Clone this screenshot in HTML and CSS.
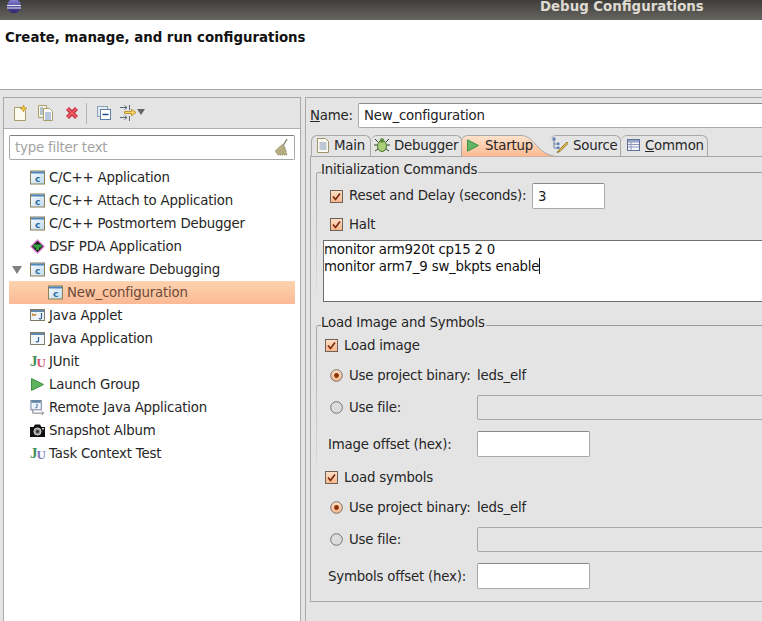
FILE: index.html
```html
<!DOCTYPE html>
<html lang="en">
<head>
<meta charset="utf-8">
<title>Debug Configurations</title>
<link rel="stylesheet" href="styles.css">
</head>
<body>
<svg class="defs" width="0" height="0">
  <defs>
    <linearGradient id="cfill" x1="0" y1="0" x2="1" y2="1"><stop offset="0" stop-color="#fbfdff"/><stop offset="1" stop-color="#bcd9ee"/></linearGradient>
    <linearGradient id="sphere" x1="0" y1="0" x2="0" y2="1"><stop offset="0" stop-color="#8a86d8"/><stop offset="1" stop-color="#2c2170"/></linearGradient>
    <linearGradient id="tabfill" x1="0" y1="0" x2="0" y2="1"><stop offset="0" stop-color="#fde2cc"/><stop offset="1" stop-color="#fbb98f"/></linearGradient>
    <linearGradient id="chk" x1="0" y1="0" x2="0" y2="1"><stop offset="0" stop-color="#fde0c8"/><stop offset="1" stop-color="#f9b68a"/></linearGradient>
    <symbol id="capp" viewBox="0 0 15 14">
      <rect x=".5" y=".5" width="14" height="13" fill="url(#cfill)" stroke="#8a7f55"/>
      <rect x="1" y="1" width="13" height="2" fill="#4f86b8"/>
      <text x="7.5" y="11.500" text-anchor="middle" font-family="DejaVu Sans" font-weight="700" font-size="9" fill="#2c6aa0">c</text>
    </symbol>
    <symbol id="check" viewBox="0 0 13 13">
      <rect x=".5" y=".5" width="12" height="12" fill="url(#chk)" stroke="#6e6258"/>
      <path d="M3 6.500 5.500 9.500 10 3.500" fill="none" stroke="#7a2a10" stroke-width="1.700"/>
    </symbol>
    <symbol id="radio-on" viewBox="0 0 13 13">
      <circle cx="6.500" cy="6.500" r="5.800" fill="url(#chk)" stroke="#77706a"/>
      <circle cx="6.500" cy="6.500" r="2.400" fill="#8a3208"/>
    </symbol>
    <symbol id="radio-off" viewBox="0 0 13 13">
      <circle cx="6.500" cy="6.500" r="5.800" fill="#dcdcdc" stroke="#77706a"/>
    </symbol>
  </defs>
</svg>

<header class="titlebar">
  <svg class="eclipse" width="14" height="13" viewBox="0 0 14 13">
    <circle cx="7" cy="6" r="7" fill="url(#sphere)"/>
    <path d="M0 5.500h14M0 8h14" stroke="#e8e8f4"/>
  </svg>
  <span class="title">Debug Configurations</span>
</header>

<section class="banner">Create, manage, and run configurations</section>

<main class="workspace">
  <aside class="left">
    <div class="toolbar">
      <svg class="tool" width="14" height="16" viewBox="0 0 14 16">
        <path d="M.5 2.500h8l3 3v10h-11z" fill="#fbfbf0" stroke="#a99d6a"/>
        <path d="M9.500 0l1 2.500 2.500 1-2.500 1-1 2.500-1-2.500-2.500-1 2.500-1z" fill="#f4c430" stroke="#b08820" stroke-width=".6"/>
      </svg>
      <svg class="tool tool-dup" width="15" height="16" viewBox="0 0 15 16">
        <path d="M.5.500h8v3h-3v9h-5z" fill="#f8f6e6" stroke="#a99d6a"/>
        <path d="M5.500 3.500h6l3 3v9h-9z" fill="#fff" stroke="#a99d6a"/>
        <path d="M7 8h6M7 10h6M7 12h6M7 14h6M2 3h3M2 5h3M2 7h3M2 9h3" stroke="#6f8db5"/>
      </svg>
      <svg class="tool tool-del" width="14" height="14" viewBox="0 0 14 14">
        <path d="M2.500 2.500 11.500 11.500M11.500 2.500 2.500 11.500" stroke="#c02a38" stroke-width="4.200"/>
        <path d="M2.500 2.500 11.500 11.500M11.500 2.500 2.500 11.500" stroke="#ee5a66" stroke-width="2"/>
      </svg>
      <span class="tool-sep"></span>
      <svg class="tool tool-col" width="14" height="14" viewBox="0 0 14 14">
        <rect x=".5" y=".5" width="10" height="10" fill="#e4ebf3" stroke="#8aa0b8"/>
        <rect x="3.500" y="3.500" width="10" height="10" fill="#fff" stroke="#5a80a8"/>
        <path d="M5.500 8.500h6" stroke="#1c4f88" stroke-width="1.500"/>
      </svg>
      <svg class="tool tool-flt" width="25" height="16" viewBox="0 0 25 16">
        <path d="M0 2.500h7M4.500 .5l2.500 2-2.500 2M0 12.500h7M4.500 10.500l2.500 2-2.500 2M9.500 0v5M9.500 11v5" fill="none" stroke="#5a6a78"/>
        <path d="M4.500 6.500h7V4.300L16 7.500l-4.500 3.200V8.500h-7z" fill="#f8d860" stroke="#b08018" stroke-width=".8"/>
        <path d="M17 4h8l-4 6z" fill="#666"/>
      </svg>
    </div>
    <div class="filter-wrap">
      <div class="filter">
        <span class="filter-text">type filter text</span>
        <svg width="13" height="17" viewBox="0 0 13 17">
          <path d="M12 0 8 7" stroke="#8a8a78" stroke-width="1.500"/>
          <path d="M7 5.500 10 8 12 16H3L0 12z" fill="#b6ae80" stroke="#6f7058" stroke-width=".7" stroke-dasharray="1 1"/>
        </svg>
      </div>
    </div>
    <ul class="tree">
      <li class="node"><svg class="ico"><use href="#capp"/></svg><span>C/C++ Application</span></li>
      <li class="node"><svg class="ico"><use href="#capp"/></svg><span>C/C++ Attach to Application</span></li>
      <li class="node"><svg class="ico"><use href="#capp"/></svg><span>C/C++ Postmortem Debugger</span></li>
      <li class="node">
        <svg class="ico" viewBox="0 0 15 15">
          <path d="M7.500 0 15 7.500 7.500 15 0 7.500z" fill="#f080e0"/>
          <path d="M7.500 1.800 13.200 7.500 7.500 13.200 1.800 7.500z" fill="#222"/>
          <rect x="3.500" y="5.500" width="8" height="3" fill="#30a040"/>
          <rect x="6" y="8" width="3" height="3" fill="#30a040"/>
        </svg><span>DSF PDA Application</span></li>
      <li class="node"><span class="twisty"></span><svg class="ico"><use href="#capp"/></svg><span>GDB Hardware Debugging</span></li>
      <li class="node child selected"><svg class="ico"><use href="#capp"/></svg><span>New_configuration</span></li>
      <li class="node">
        <svg class="ico" viewBox="0 0 15 15">
          <rect x=".5" y="1.500" width="14" height="11" fill="#eef3f8" stroke="#7f7a60"/>
          <rect x="1" y="2" width="13" height="2" fill="#5f86ad"/>
          <path d="M2 5.500c1 2 2.500 2 4 .5M2 7h4" stroke="#c08a30" fill="none" stroke-width="1.300"/>
          <path d="M11.500 5v5c0 1.200-2 1.200-2.500.3" stroke="#2c5f98" fill="none" stroke-width="1.200"/>
        </svg><span>Java Applet</span></li>
      <li class="node">
        <svg class="ico" viewBox="0 0 15 15">
          <rect x=".5" y="1.500" width="14" height="12" fill="#f2f6fa" stroke="#857f68"/>
          <rect x="1" y="2" width="13" height="2" fill="#5f86ad"/>
          <path d="M8.500 6v4c0 1.200-2 1.200-2.500.3" stroke="#2c5f98" fill="none" stroke-width="1.200"/>
        </svg><span>Java Application</span></li>
      <li class="node"><span class="ju"><b class="ju-j">J</b><b class="ju-u">U</b></span><span>JUnit</span></li>
      <li class="node">
        <svg class="ico" viewBox="0 0 15 15">
          <path d="M1.500 1.500 13.500 7.500 1.500 13.500z" fill="#5cb35c" stroke="#3f9348"/>
        </svg><span>Launch Group</span></li>
      <li class="node">
        <svg class="ico" viewBox="0 0 15 16">
          <rect x=".5" y=".5" width="11" height="10" fill="#eef3f8" stroke="#6a7f99"/>
          <rect x="1" y="1" width="10" height="2" fill="#5f86ad"/>
          <path d="M7 4v3.500c0 1-1.500 1-2 .3" stroke="#2c5f98" fill="none"/>
          <path d="M2.500 10.500v3.500h11M12 12l2 2-2 2" stroke="#77787c" fill="none"/>
        </svg><span>Remote Java Application</span></li>
      <li class="node">
        <svg class="ico" viewBox="0 0 15 13">
          <path d="M0 3h3.500L5 .5h5L11.500 3H15v10H0z" fill="#111"/>
          <circle cx="7.500" cy="7.500" r="3.600" fill="#9a9a9a" stroke="#e8e8e8" stroke-width=".8"/>
          <circle cx="7.500" cy="7.500" r="1.600" fill="#333"/>
          <rect x="12" y="4" width="2" height="1.500" fill="#ddd"/>
        </svg><span>Snapshot Album</span></li>
      <li class="node"><span class="ju ju-task"><b class="ju-j">J</b><b class="ju-u">U</b></span><span>Task Context Test</span></li>
    </ul>
  </aside>

  <section class="right">
    <div class="name-row">
      <label class="name-label"><u>N</u>ame:</label>
      <div class="input name-input">New_configuration</div>
    </div>
    <div class="tabs">
      <div class="tab tab-main">
        <svg width="12" height="15" viewBox="0 0 12 15"><path d="M.5.500h8l3 3v11h-11z" fill="#fbfaf0" stroke="#a0946a"/><path d="M2.500 5h7M2.500 7h7M2.500 9h7M2.500 11h7" stroke="#7f98b8"/></svg>
        <span>Main</span>
      </div>
      <div class="tab tab-debug">
        <svg width="16" height="16" viewBox="0 0 16 16">
          <path d="M1 2l3 3M15 2l-3 3M0 8h3M13 8h3M1 14l3-2M15 14l-3-2" stroke="#2f4a1e"/>
          <ellipse cx="8" cy="9" rx="4.500" ry="5.500" fill="#a8cf78" stroke="#46702c"/>
          <circle cx="8" cy="3.500" r="2.200" fill="#5f8a3c"/>
        </svg>
        <span>Debugger</span>
      </div>
      <div class="tab tab-start">
        <svg class="tab-curve" width="98" height="22" viewBox="0 0 98 22"><path d="M.5 22V7Q.5 1 6.500 .5H60C74 .5 76 21 97 21.500V22z" fill="url(#tabfill)" stroke="#a8a8a8"/></svg>
        <svg class="tab-ico" width="12" height="13" viewBox="0 0 12 13"><path d="M.5.800 11.500 6.500.5 12.200z" fill="#62b562" stroke="#3f9348"/></svg>
        <span class="tab-txt">Startup</span>
      </div>
      <div class="tab tab-source">
        <svg width="16" height="16" viewBox="0 0 16 16">
          <path d="M2 3v8h3M2 7h3" fill="none" stroke="#6a7fa8"/>
          <rect x=".5" y=".5" width="3" height="3" fill="#5a7fb8"/><rect x="5" y="5.500" width="2.500" height="2.500" fill="#5a7fb8"/><rect x="5" y="9.500" width="2.500" height="2.500" fill="#5a7fb8"/>
          <path d="M15 5 7 13l-2 2.500 3-1 8-8z" fill="#e8c050" stroke="#806018" stroke-width=".8"/>
        </svg>
        <span>Source</span>
      </div>
      <div class="tab tab-common">
        <svg width="13" height="12" viewBox="0 0 13 12"><rect x=".5" y=".5" width="12" height="11" fill="#f4f6fa" stroke="#5f6f98"/><path d="M1 3h11M1 5.500h11M1 8h11M4 3v8" stroke="#8d9ab8"/><rect x="1" y="1" width="11" height="2" fill="#9aa8c8"/></svg>
        <span><u>C</u>ommon</span>
      </div>
    </div>
    <div class="folder">
      <div class="group group-init">
        <div class="legend">Initialization Commands</div>
        <div class="row row-reset">
          <svg class="box"><use href="#check"/></svg>
          <span class="reset-label">Reset and Delay (seconds):</span>
          <div class="input small-input">3</div>
        </div>
        <div class="row row-halt">
          <svg class="box"><use href="#check"/></svg>
          <span>Halt</span>
        </div>
        <div class="commands">
          <div>monitor arm920t cp15 2 0</div>
          <div>monitor arm7_9 sw_bkpts enable<span class="caret"></span></div>
        </div>
      </div>
      <div class="group group-load">
        <div class="legend">Load Image and Symbols</div>
        <div class="row row-load first-load"><svg class="box"><use href="#check"/></svg><span>Load image</span></div>
        <div class="row row-radio gap-radio"><svg class="box"><use href="#radio-on"/></svg><span class="radio-label">Use project binary:</span><span>leds_elf</span></div>
        <div class="row row-radio gap-file"><svg class="box"><use href="#radio-off"/></svg><span class="radio-label">Use file:</span><div class="disabled-input"></div></div>
        <div class="row row-offset"><span class="off-label">Image offset (hex):</span><div class="input offset-input"></div></div>
        <div class="row row-load gap-load"><svg class="box"><use href="#check"/></svg><span>Load symbols</span></div>
        <div class="row row-radio gap-radio"><svg class="box"><use href="#radio-on"/></svg><span class="radio-label">Use project binary:</span><span>leds_elf</span></div>
        <div class="row row-radio gap-file"><svg class="box"><use href="#radio-off"/></svg><span class="radio-label">Use file:</span><div class="disabled-input"></div></div>
        <div class="row row-offset"><span class="off-label">Symbols offset (hex):</span><div class="input offset-input"></div></div>
      </div>
    </div>
  </section>
</main>
</body>
</html>
```
FILE: styles.css
```css
* { box-sizing: border-box; }
html, body { margin: 0; padding: 0; }
body {
  width: 762px;
  height: 621px;
  overflow: hidden;
  background: #e4e4e4;
  color: #262626;
  font: 13.33px/17px "DejaVu Sans", sans-serif;
  letter-spacing: -.2px;
}
.defs { display: block; height: 0; }

.titlebar {
  height: 20px;
  display: flex;
  align-items: flex-start;
  overflow: hidden;
  background: linear-gradient(#3f3e3a, #666561);
}
.eclipse { margin-left: 7px; flex: none; }
.title {
  margin-left: 519px;
  margin-top: -2px;
  color: #dfdbd2;
  font-weight: 700;
  letter-spacing: 0;
  white-space: nowrap;
}

.banner {
  height: 70px;
  background: #fff;
  border-bottom: 1px solid #a5a5a5;
  padding: 9px 0 0 5px;
  font-weight: 700;
  letter-spacing: 0;
  color: #111;
}

.workspace {
  display: flex;
  height: 531px;
  padding: 7px 0 0 3px;
}

/* left column */
.left {
  flex: none;
  width: 298px;
  background: #fff;
  border: 1px solid #a9a9a9;
  border-bottom: 0;
}
.toolbar {
  height: 31px;
  background: #e4e4e4;
  border-bottom: 1px solid #b0b0b0;
  display: flex;
  align-items: center;
  padding-left: 10px;
}
.tool { flex: none; }
.tool-dup { margin-left: 10px; }
.tool-del { margin-left: 12px; }
.tool-sep { width: 1px; height: 21px; background: #b4b4b4; margin-left: 7px; }
.tool-col { margin-left: 10px; }
.tool-flt { margin-left: 9px; }

.filter-wrap { padding: 6px 5px 0 5px; }
.filter {
  height: 25px;
  border: 1px solid #a8a8a8;
  border-top-color: #808080;
  border-radius: 2px;
  display: flex;
  align-items: center;
  justify-content: space-between;
  padding: 0 6px 0 5px;
}
.filter-text { color: #a3a3a3; }

.tree { list-style: none; margin: 6px 0 0; padding: 0; }
.node {
  height: 23px;
  display: flex;
  align-items: center;
  margin: 0 5px 0 5px;
  padding-left: 21px;
}
.node span:last-child { margin-left: 4px; }
.twisty {
  flex: none;
  width: 0; height: 0;
  margin-left: -18px;
  margin-right: 8px;
  border: 5px solid transparent;
  border-top: 8px solid #808080;
  border-bottom: 0;
}
.ico { width: 15px; height: 15px; flex: none; }
.child { padding-left: 39px; }
.selected {
  background: linear-gradient(#fdd3b0, #fbb994);
  color: #6e4a3a;
}
.ju {
  width: 15px;
  flex: none;
  display: flex;
  font: 700 15px/15px "Liberation Serif", serif;
  letter-spacing: -1px;
}
.ju-j { color: #3f8f5a; }
.ju-u { color: #d8566e; font-size: 13px; margin-top: 1px; }
.ju-task .ju-u { color: #7d79b8; }

/* right column */
.right {
  flex: none;
  width: 457px;
  margin-left: 4px;
  border-left: 1px solid #a9a9a9;
  border-top: 1px solid #a9a9a9;
  padding-left: 4px;
  overflow: hidden;
}
.name-row {
  display: flex;
  align-items: center;
  height: 25px;
  margin-top: 5px;
}
.name-label { width: 48px; flex: none; }
.input {
  background: #fff;
  border: 1px solid #aaa;
  border-top-color: #8a8a8a;
  border-radius: 2px;
  display: flex;
  align-items: center;
  padding-left: 5px;
  color: #222;
}
.name-input { width: 500px; height: 25px; flex: none; }

.tabs {
  display: flex;
  height: 21px;
  margin-top: 7px;
  padding-left: 1px;
}
.tab {
  flex: none;
  height: 21px;
  display: flex;
  align-items: center;
  padding-bottom: 2px;
  border: 1px solid #a8a8a8;
  border-bottom: 0;
  border-radius: 6px 6px 0 0;
}
.tab-main { width: 60px; padding-left: 5px; gap: 5px; }
.tab-debug { width: 91px; padding-left: 3px; gap: 4px; border-left: 0; }
.tab-start {
  width: 88px;
  border: 0;
  position: relative;
  padding-left: 6px;
  padding-bottom: 0;
  margin-left: -1px;
}
.tab-curve { position: absolute; left: 0; top: 0; }
.tab-ico, .tab-txt { position: relative; }
.tab-txt { margin-left: 6px; }
.tab-source {
  width: 71px;
  margin-left: 1px;
  padding-left: 2px;
  gap: 5px;
  border-left: 0;
  position: relative;
}
.tab-common { width: 87px; padding-left: 6px; gap: 5px; border-left: 0; }

.folder {
  width: 520px;
  height: 446px;
  border-left: 1px solid #a8a8a8;
  border-top: 1px solid #a8a8a8;
  border-bottom: 1px solid #a8a8a8;
  padding: 15px 0 0 5px;
}

.group {
  border-top: 1px solid #9a9a9a;
  border-top-left-radius: 3px;
  background: linear-gradient(#a5a5a5, #e4e4e4) left top / 1px 100% no-repeat;
}
.legend {
  display: table;
  margin: -12px 0 0 5px;
  padding-right: 1px;
  background: #e4e4e4;
  height: 17px;
}
.row { display: flex; align-items: center; }
.box { width: 13px; height: 13px; flex: none; }

.group-init { height: 130px; }
.row-reset { height: 26px; margin-top: 5px; padding-left: 14px; }
.reset-label { margin-left: 6px; width: 177px; flex: none; padding-bottom: 2px; white-space: nowrap; }
.small-input { width: 73px; height: 26px; margin-left: 6px; }
.row-halt { height: 18px; margin-top: 6px; padding-left: 14px; }
.row-halt span { margin-left: 6px; }
.commands {
  margin: 7px 0 0 7px;
  height: 62px;
  background: #fff;
  border: 1px solid #6e6e6e;
  color: #111;
}
.caret {
  display: inline-block;
  width: 1px;
  height: 16px;
  background: #111;
  vertical-align: -3px;
}

.group-load { margin-top: 23px; height: 165px; background-size: 1px 160px; }
.row-load { height: 18px; padding-left: 9px; }
.first-load { margin-top: 5px; }
.row-load span { margin-left: 6px; }
.gap-load { margin-top: 11px; }
.row-radio { padding-left: 14px; height: 25px; }
.gap-radio { height: 18px; margin-top: 12px; }
.gap-file { margin-top: 11px; }
.radio-label { width: 128px; margin-left: 6px; flex: none; }
.disabled-input {
  width: 300px;
  height: 25px;
  flex: none;
  border: 1px solid #a8a8a8;
  border-radius: 2px;
  background: #e4e4e4;
}
.row-offset { height: 26px; margin-top: 11px; padding-left: 12px; }
.off-label { width: 149px; flex: none; }
.offset-input { width: 113px; height: 26px; }
```
